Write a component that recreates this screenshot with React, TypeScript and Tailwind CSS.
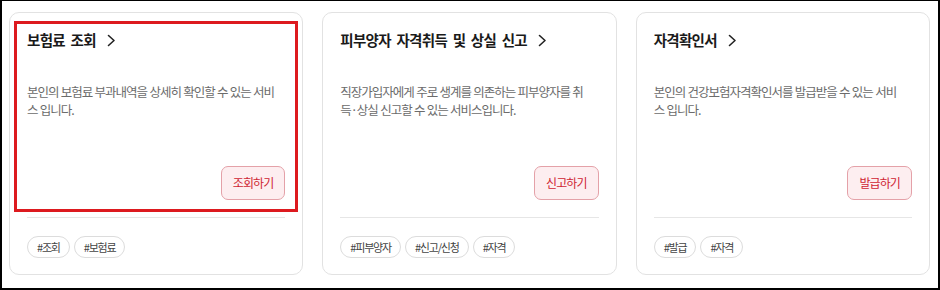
import React from "react";

type Card = {
  title: string;
  lines: string[];
  button: string;
  tags: string[];
  highlight?: boolean;
};

const cards: Card[] = [
  {
    title: "보험료 조회",
    lines: ["본인의 보험료 부과내역을 상세히 확인할 수 있는 서비", "스 입니다."],
    button: "조회하기",
    tags: ["#조회", "#보험료"],
    highlight: true,
  },
  {
    title: "피부양자 자격취득 및 상실 신고",
    lines: ["직장가입자에게 주로 생계를 의존하는 피부양자를 취", "득·상실 신고할 수 있는 서비스입니다."],
    button: "신고하기",
    tags: ["#피부양자", "#신고/신청", "#자격"],
  },
  {
    title: "자격확인서",
    lines: ["본인의 건강보험자격확인서를 발급받을 수 있는 서비", "스 입니다."],
    button: "발급하기",
    tags: ["#발급", "#자격"],
  },
];

function Chevron() {
  return (
    <svg width="9" height="13" viewBox="0 0 9 13" fill="none" className="shrink-0">
      <path d="M1.5 1.5 L7 6.5 L1.5 11.5" stroke="#222" strokeWidth="1.6" strokeLinecap="round" strokeLinejoin="round" />
    </svg>
  );
}

function ServiceCard({ card }: { card: Card }) {
  return (
    <div className="relative flex h-[263px] flex-col rounded-[10px] border border-[#e2e2e2] bg-white px-[17px] pt-[16px] pb-[16px]">
      <div className="flex items-center gap-[11px]">
        <span className="text-[14.5px] font-bold leading-[22px] tracking-[-0.7px] [word-spacing:3px] text-[#1a1a1a]">
          {card.title}
        </span>
        <Chevron />
      </div>
      <div className="mt-[32px] text-[12.5px] leading-[18px] tracking-[-1px] [word-spacing:0.5px] text-[#6b6b6b]">
        {card.lines.map((l, i) => (
          <div key={i} className="whitespace-nowrap">
            {l}
          </div>
        ))}
      </div>
      <div className="mt-auto flex justify-end">
        <button className="flex h-[34px] items-center rounded-[7px] border border-[#e4a1a8] bg-[#fdeef0] px-[11px] text-[12px] tracking-[-0.9px] text-[#cf2533]">
          {card.button}
        </button>
      </div>
      <div className="mt-[17px] h-px bg-[#e6e6e6]" />
      <div className="mt-[18px] flex gap-[4px]">
        {card.tags.map((t) => (
          <span
            key={t}
            className="flex h-[22px] items-center rounded-full border border-[#dcdcdc] px-[9px] text-[11px] tracking-[-1.2px] text-[#444]"
          >
            {t}
          </span>
        ))}
      </div>
      {card.highlight && (
        <div className="pointer-events-none absolute left-[4px] top-[8px] h-[191px] w-[284px] border-[3px] border-[#dd1a1f]" />
      )}
    </div>
  );
}

export default function App() {
  return (
    <div className="box-border h-[290px] w-[940px] border-t-[1px] border-l-[2px] border-r-[2px] border-b-[2px] border-black bg-white pl-[7px] pr-[8px] pt-[11px] font-['Noto_Sans_CJK_KR','Noto_Sans',sans-serif]">
      <div className="grid grid-cols-3 gap-[19px]">
        {cards.map((c) => (
          <ServiceCard key={c.title} card={c} />
        ))}
      </div>
    </div>
  );
}
